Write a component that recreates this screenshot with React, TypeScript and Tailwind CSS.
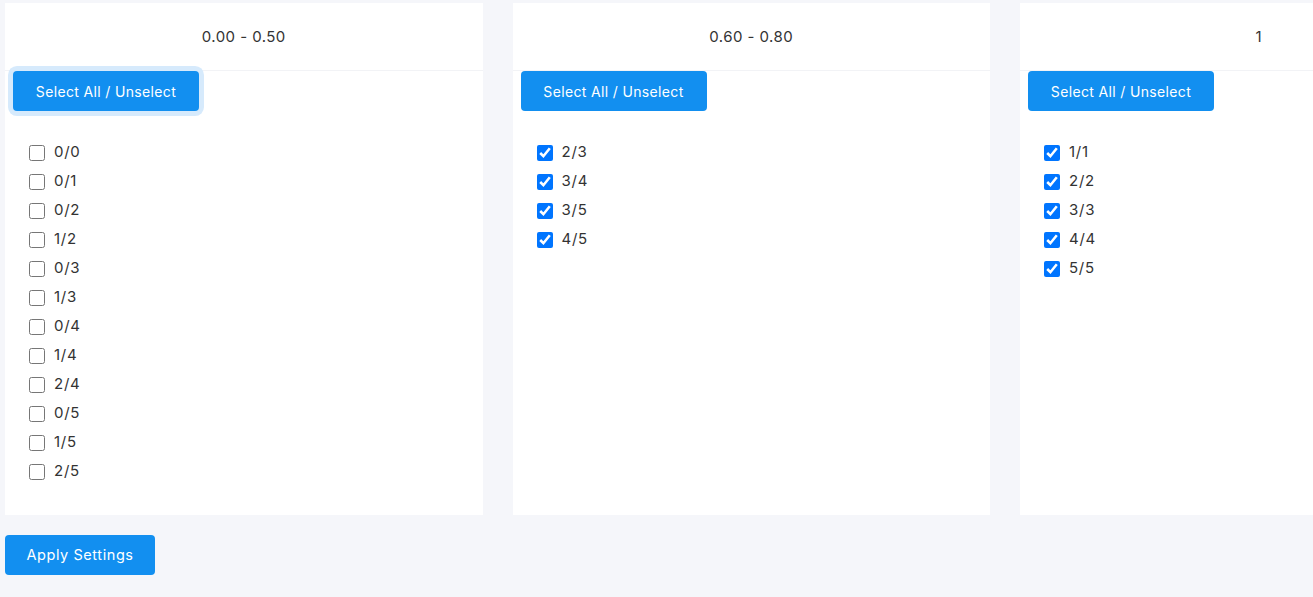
import React from "react";

type Group = {
  range: string;
  items: string[];
  checked: boolean;
  focused?: boolean;
};

const groups: Group[] = [
  {
    range: "0.00 - 0.50",
    items: ["0/0", "0/1", "0/2", "1/2", "0/3", "1/3", "0/4", "1/4", "2/4", "0/5", "1/5", "2/5"],
    checked: false,
    focused: true,
  },
  { range: "0.60 - 0.80", items: ["2/3", "3/4", "3/5", "4/5"], checked: true },
  { range: "1", items: ["1/1", "2/2", "3/3", "4/4", "5/5"], checked: true },
];

function GroupCard({ group }: { group: Group }) {
  return (
    <div className="w-[477.5px] shrink-0 h-[512px] bg-white">
      <div className="h-[68px] pt-[2px] flex items-center justify-center border-b border-[#f2f3f6] text-[15px] tracking-[0.03em] text-[#333]">
        {group.range}
      </div>
      <div className="pl-2">
        <button
          className={
            "h-10 w-[186px] rounded-sm bg-[#128ff0] text-white text-[14px] tracking-[0.025em] " +
            (group.focused ? "shadow-[0_0_0_5px_#d6eafc]" : "")
          }
        >
          Select All / Unselect
        </button>
      </div>
      <div className="mt-[27px] pl-6 flex flex-col">
        {group.items.map((item) => (
          <label
            key={item}
            className="h-[29px] flex items-center gap-[9px] text-[15px] tracking-[0.05em] text-[#333]"
          >
            <input
              type="checkbox"
              defaultChecked={group.checked}
              className="w-4 h-4 m-0 accent-[#0075ff]"
            />
            <span>{item}</span>
          </label>
        ))}
      </div>
    </div>
  );
}

export default function App() {
  return (
    <div
      className="w-[1313px] h-[597px] overflow-hidden bg-[#f5f6fa] pt-[3px]"
      style={{ fontFamily: "Inter, 'Noto Sans', sans-serif" }}
    >
      <div className="flex gap-[30px] pl-[5px]">
        {groups.map((g) => (
          <GroupCard key={g.range} group={g} />
        ))}
      </div>
      <div className="pl-[5px] mt-5">
        <button className="h-10 w-[150px] rounded-sm bg-[#128ff0] text-white text-[14.5px] tracking-[0.04em]">
          Apply Settings
        </button>
      </div>
    </div>
  );
}
